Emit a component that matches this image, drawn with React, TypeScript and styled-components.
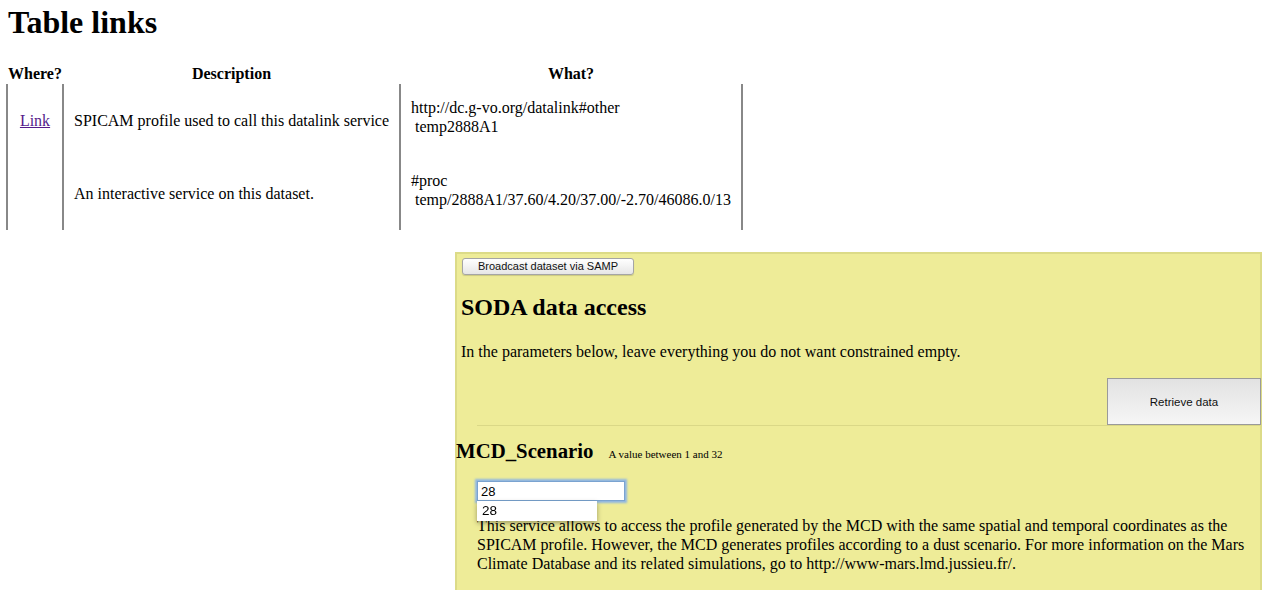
import React from "react";
import styled, { createGlobalStyle } from "styled-components";

const Global = createGlobalStyle`
  html, body { margin: 0; padding: 0; background: #fff; }
  body { font-family: "Liberation Serif", "Times New Roman", serif; font-size: 16px; color: #000; }
`;

const Page = styled.div`
  width: 1265px;
  padding: 4px 0 0 0;
`;

const Title = styled.h1`
  margin: 0 0 0 8px;
  font-size: 32px;
  line-height: 37px;
  font-weight: bold;
`;

const LinksTable = styled.table`
  margin: 23px 0 0 6px;
  border-collapse: collapse;
  table-layout: fixed;
  width: 735px;
`;

const Th = styled.th`
  font-weight: bold;
  font-size: 16px;
  line-height: 20px;
  padding: 0;
  text-align: center;
`;

const Td = styled.td<{ $align?: string }>`
  border-left: 2px solid #888;
  border-right: 2px solid #888;
  padding: 0 10px;
  vertical-align: middle;
  text-align: ${(p) => p.$align || "left"};
  line-height: 19px;
  white-space: nowrap;
`;

const Row = styled.tr<{ $h: number }>`
  height: ${(p) => p.$h}px;
`;

const Link = styled.a`
  color: #551a8b;
  text-decoration: underline;
`;

const WhatLines = styled.div`
  padding-bottom: 7px;
`;

const Panel = styled.form`
  margin: 22px 3px 0 455px;
  background: #eeec98;
  border: 2px solid #dcdb88;
  border-bottom: none;
  padding: 2px 0 40px 0;
`;

const SampButton = styled.button`
  margin-left: 5px;
  height: 17px;
  padding: 0 15px;
  font-family: "Liberation Sans", Arial, sans-serif;
  font-size: 11px;
  line-height: 15px;
  color: #111;
  background: linear-gradient(#ffffff, #e6e6e6);
  border: 1px solid #a5a5a5;
  border-radius: 3px;
  box-shadow: 0 1px 1px rgba(0, 0, 0, 0.15);
`;

const PanelTitle = styled.h2`
  margin: 18px 0 0 4px;
  font-size: 24px;
  line-height: 28px;
  font-weight: bold;
`;

const Intro = styled.p`
  margin: 22px 0 0 4px;
  line-height: 18px;
`;

const SubmitRow = styled.div`
  display: flex;
  justify-content: flex-end;
  margin-top: 17px;
`;

const RetrieveButton = styled.button`
  width: 154px;
  height: 47px;
  margin-right: -1px;
  font-family: "Liberation Sans", Arial, sans-serif;
  font-size: 11.5px;
  color: #111;
  background: linear-gradient(#e2e2e2, #f6f6f6);
  border: 1px solid #9a9a9a;
`;

const Divider = styled.div`
  margin-left: 20px;
  border-top: 1px solid #dad887;
`;

const ParamHeader = styled.div`
  display: flex;
  align-items: baseline;
  margin-top: 13px;
`;

const ParamName = styled.h3`
  margin: 0 0 0 -1px;
  font-size: 20.8px;
  line-height: 24px;
  font-weight: bold;
`;

const ParamNote = styled.span`
  margin-left: 15px;
  font-size: 11px;
`;

const ParamBody = styled.div`
  padding: 18px 8px 0 20px;
`;

const InputWrap = styled.div`
  position: relative;
  width: 148px;
`;

const TextInput = styled.input`
  box-sizing: border-box;
  display: block;
  width: 148px;
  height: 20px;
  padding: 0 3px;
  font-family: "Liberation Sans", Arial, sans-serif;
  font-size: 13px;
  color: #000;
  background: #fff;
  border: 1px solid #7aa3d0;
  outline: none;
  box-shadow: 0 0 2px 2px #8fb6e3;
  caret-color: #000;
`;

const Suggest = styled.div`
  position: absolute;
  left: 0;
  top: 20px;
  width: 120px;
  height: 20px;
  box-sizing: border-box;
  padding-left: 5px;
  background: #fff;
  font-family: "Liberation Sans", Arial, sans-serif;
  font-size: 13.5px;
  line-height: 20px;
  box-shadow: 0 2px 5px rgba(0, 0, 0, 0.35);
  z-index: 2;
`;

const Description = styled.p`
  margin: 15px 0 0 0;
  line-height: 19px;
`;

export default function App() {
  return (
    <Page>
      <Global />
      <Title>Table links</Title>
      <LinksTable>
        <colgroup>
          <col style={{ width: 56 }} />
          <col style={{ width: 337 }} />
          <col style={{ width: 342 }} />
        </colgroup>
        <thead>
          <tr>
            <Th>Where?</Th>
            <Th>Description</Th>
            <Th>What?</Th>
          </tr>
        </thead>
        <tbody>
          <Row $h={73}>
            <Td $align="center">
              <Link href="#">Link</Link>
            </Td>
            <Td>SPICAM profile used to call this datalink service</Td>
            <Td>
              <WhatLines>
                <div>http://dc.g-vo.org/datalink#other</div>
                <div>&nbsp;temp2888A1</div>
              </WhatLines>
            </Td>
          </Row>
          <Row $h={73}>
            <Td />
            <Td>An interactive service on this dataset.</Td>
            <Td>
              <WhatLines>
                <div>#proc</div>
                <div>&nbsp;temp/2888A1/37.60/4.20/37.00/-2.70/46086.0/13</div>
              </WhatLines>
            </Td>
          </Row>
        </tbody>
      </LinksTable>
      <Panel onSubmit={(e) => e.preventDefault()}>
        <SampButton type="button">Broadcast dataset via SAMP</SampButton>
        <PanelTitle>SODA data access</PanelTitle>
        <Intro>In the parameters below, leave everything you do not want constrained empty.</Intro>
        <SubmitRow>
          <RetrieveButton type="submit">Retrieve data</RetrieveButton>
        </SubmitRow>
        <Divider />
        <ParamHeader>
          <ParamName>MCD_Scenario</ParamName>
          <ParamNote>A value between 1 and 32</ParamNote>
        </ParamHeader>
        <ParamBody>
          <InputWrap>
            <TextInput defaultValue="28" autoFocus />
            <Suggest>28</Suggest>
          </InputWrap>
          <Description>
            This service allows to access the profile generated by the MCD with the same spatial and
            temporal coordinates as the SPICAM profile. However, the MCD generates profiles according
            to a dust scenario. For more information on the Mars Climate Database and its related
            simulations, go to http://www-mars.lmd.jussieu.fr/.
          </Description>
        </ParamBody>
      </Panel>
    </Page>
  );
}
